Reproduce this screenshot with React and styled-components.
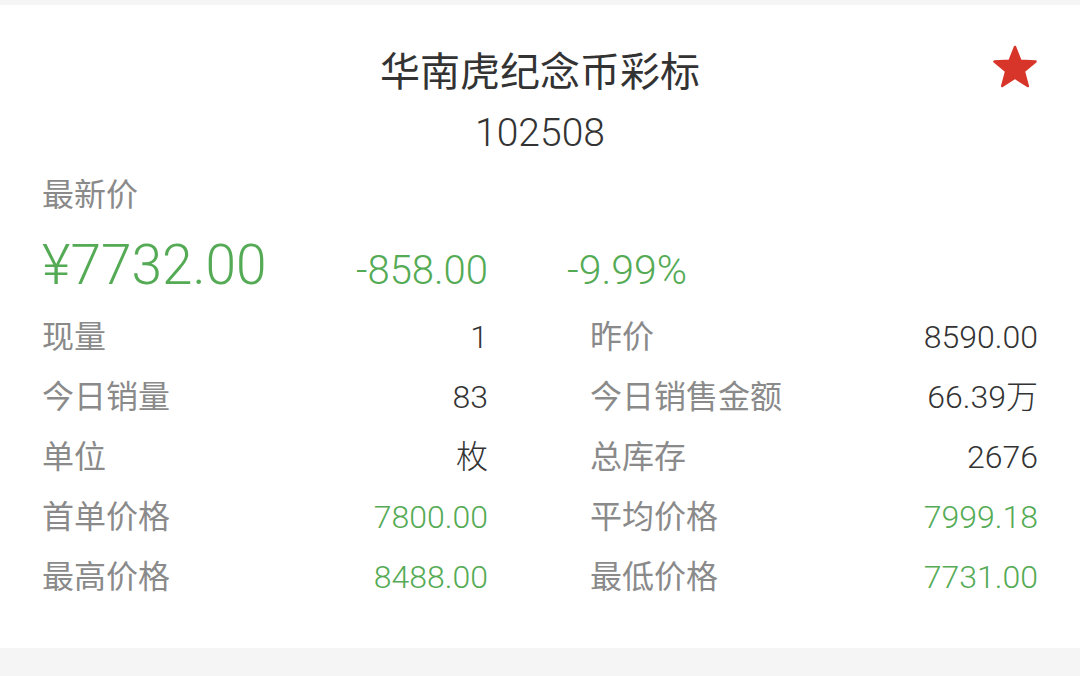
import styled, { createGlobalStyle } from "styled-components";

const GlobalStyle = createGlobalStyle`
  html, body {
    margin: 0;
    padding: 0;
    background: #f5f5f5;
    font-family: Roboto, "Noto Sans CJK SC", sans-serif;
  }
`;

const Page = styled.div`
  width: 1080px;
  height: 676px;
  padding-top: 5px;
  box-sizing: border-box;
  overflow: hidden;
`;

const Card = styled.div`
  background: #fff;
  height: 643px;
  box-sizing: border-box;
  padding: 38px 42px 0 42px;
`;

const Header = styled.div`
  display: grid;
  grid-template-columns: 1fr auto 1fr;
`;

const TitleBlock = styled.div`
  grid-column: 2;
  text-align: center;
`;

const Title = styled.div`
  font-size: 40px;
  line-height: 60px;
  color: #333;
`;

const Code = styled.div`
  font-size: 39px;
  line-height: 60px;
  font-weight: 300;
  color: #333;
`;

const StarWrap = styled.div`
  grid-column: 3;
  justify-self: end;
  margin-top: 2px;
  width: 46px;
  height: 44px;
`;

const Caption = styled.div`
  font-size: 32px;
  line-height: 60px;
  margin-top: 2px;
  color: #8a8a8a;
`;

const PriceRow = styled.div`
  display: grid;
  grid-template-columns: 446px 1fr;
  column-gap: 79px;
  align-items: baseline;
  height: 80px;
  line-height: 80px;
  font-weight: 300;
`;

const PriceLeft = styled.div`
  display: flex;
  justify-content: space-between;
  align-items: baseline;
`;

const BigPrice = styled.span`
  font-size: 55px;
  color: #55ab55;
`;

const Change = styled.span`
  font-size: ${(p) => (p.$wide ? "41px" : "40px")};
  color: #55ab55;
`;

const Stats = styled.div`
  margin-top: 2px;
  display: grid;
  grid-template-columns: 446px 448px;
  column-gap: 102px;
`;

const Stat = styled.div`
  display: flex;
  justify-content: space-between;
  align-items: baseline;
  height: 60px;
  line-height: 60px;
`;

const Label = styled.span`
  font-size: 32px;
  color: #8a8a8a;
`;

const Value = styled.span`
  font-size: 32px;
  font-weight: 300;
  color: ${(p) => (p.$green ? "#55ab55" : "#333")};
`;

const stats = [
  ["现量", "1", false, "昨价", "8590.00", false],
  ["今日销量", "83", false, "今日销售金额", "66.39万", false],
  ["单位", "枚", false, "总库存", "2676", false],
  ["首单价格", "7800.00", true, "平均价格", "7999.18", true],
  ["最高价格", "8488.00", true, "最低价格", "7731.00", true],
];

function Star() {
  return (
    <svg width="46" height="44" viewBox="0 0 46 44">
      <path
        d="M23 2 L28.4 15.8 L43.5 16.6 L31.8 26.2 L35.8 41 L23 32.8 L10.2 41 L14.2 26.2 L2.5 16.6 L17.6 15.8 Z"
        fill="#d8352a"
        stroke="#d8352a"
        strokeWidth="2.5"
        strokeLinejoin="round"
      />
    </svg>
  );
}

export default function App() {
  return (
    <>
      <GlobalStyle />
      <Page>
        <Card>
          <Header>
            <TitleBlock>
              <Title>华南虎纪念币彩标</Title>
              <Code>102508</Code>
            </TitleBlock>
            <StarWrap>
              <Star />
            </StarWrap>
          </Header>
          <Caption>最新价</Caption>
          <PriceRow>
            <PriceLeft>
              <BigPrice>¥7732.00</BigPrice>
              <Change>-858.00</Change>
            </PriceLeft>
            <Change $wide>-9.99%</Change>
          </PriceRow>
          <Stats>
            {stats.map((s) => (
              <>
                <Stat key={s[0]}>
                  <Label>{s[0]}</Label>
                  <Value $green={s[2]}>{s[1]}</Value>
                </Stat>
                <Stat key={s[3]}>
                  <Label>{s[3]}</Label>
                  <Value $green={s[5]}>{s[4]}</Value>
                </Stat>
              </>
            ))}
          </Stats>
        </Card>
      </Page>
    </>
  );
}
